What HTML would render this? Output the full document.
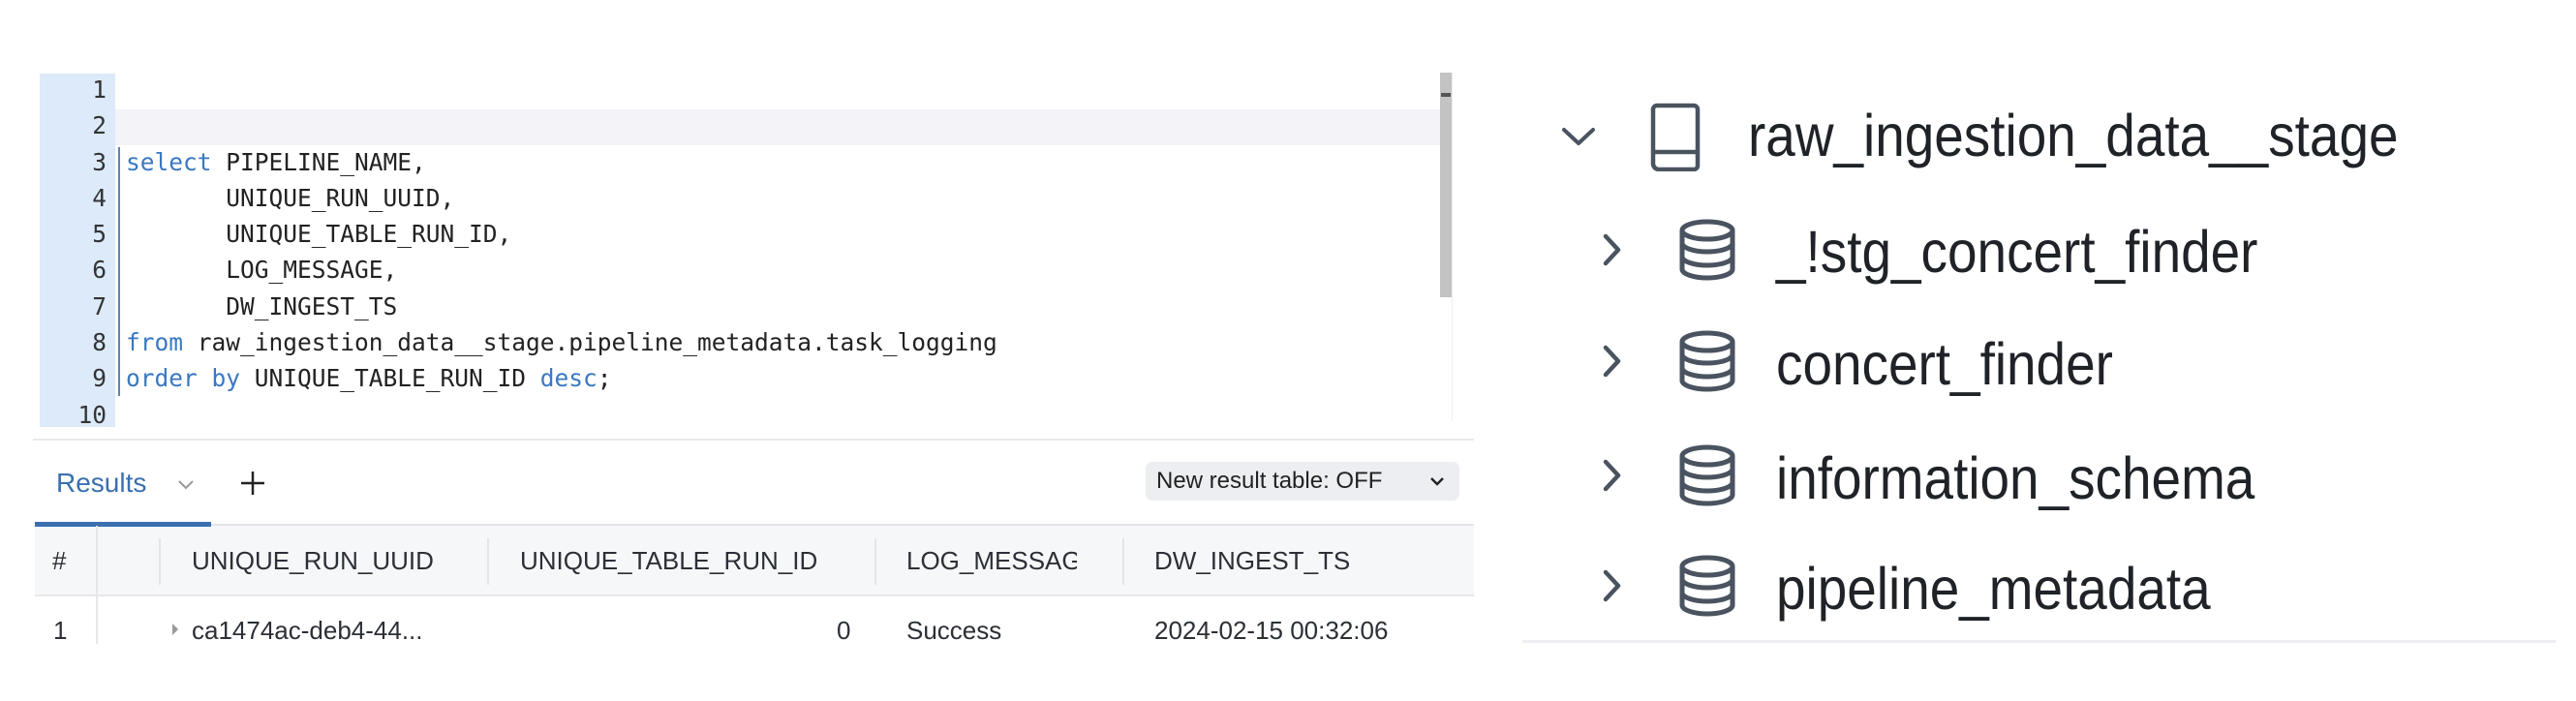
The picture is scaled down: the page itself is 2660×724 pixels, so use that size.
<!DOCTYPE html>
<html><head><meta charset="utf-8"><style>
*{margin:0;padding:0;box-sizing:border-box}
body{width:2660px;height:724px;background:#fff;position:relative;overflow:hidden;font-family:"Liberation Sans",sans-serif}
.a{position:absolute;white-space:pre}
.code{font-family:"DejaVu Sans Mono","Liberation Mono",monospace;font-size:24.5px;color:#222;line-height:37.3px}
.kw{color:#3a78c3}
.ln{font-family:"DejaVu Sans Mono",monospace;font-size:24.5px;color:#333;width:84px;text-align:right;line-height:37.3px}
.r{font-size:26px;color:#2b2f36;line-height:30px}
.t{font-size:61px;color:#1f2328;line-height:64px;transform:scaleX(0.9);transform-origin:0 50%}
</style></head><body>
<!-- editor -->
<div class="a" style="left:41px;top:76px;width:78px;height:365px;background:#dceafa"></div>
<div class="a" style="left:119px;top:113px;width:1368px;height:37px;background:#f3f3f8"></div>
<div class="a" style="left:122px;top:152px;width:2px;height:257px;background:#5b86b5"></div>
<div class="a" style="left:1487px;top:75px;width:12px;height:232px;background:#c3c3c3"></div>
<div class="a" style="left:1488px;top:96px;width:10px;height:4px;background:#555"></div>
<div class="a" style="left:1499px;top:75px;width:1px;height:360px;background:#eee"></div>
<div class="a ln" style="left:26px;top:74px">1
2
3
4
5
6
7
8
9
10</div>
<div class="a code" style="left:130px;top:74px">

<span class="kw">select</span> PIPELINE_NAME,
       UNIQUE_RUN_UUID,
       UNIQUE_TABLE_RUN_ID,
       LOG_MESSAGE,
       DW_INGEST_TS
<span class="kw">from</span> raw_ingestion_data__stage.pipeline_metadata.task_logging
<span class="kw">order by</span> UNIQUE_TABLE_RUN_ID <span class="kw">desc</span>;
</div>
<div class="a" style="left:34px;top:453px;width:1488px;height:2px;background:#e8e9ec"></div>
<!-- results bar -->
<div class="a" style="left:58px;top:483px;font-size:28px;color:#3a6fb0;line-height:32px">Results</div>
<svg class="a" style="left:180px;top:492px" width="24" height="16" viewBox="0 0 24 16"><path d="M5 5l7 7 7-7" fill="none" stroke="#999" stroke-width="2"/></svg>
<svg class="a" style="left:245px;top:483px" width="32" height="32" viewBox="0 0 32 32"><path d="M16 4v24M4 16h24" stroke="#222" stroke-width="2.5"/></svg>
<div class="a" style="left:1183px;top:477px;width:324px;height:40px;background:#eceef2;border-radius:7px"></div>
<div class="a" style="left:1194px;top:483px;font-size:24px;color:#222;line-height:28px">New result table: OFF</div>
<svg class="a" style="left:1474px;top:490px" width="20" height="14" viewBox="0 0 20 14"><path d="M4 4l6 6 6-6" fill="none" stroke="#222" stroke-width="2.4"/></svg>
<!-- table -->
<div class="a" style="left:36px;top:541px;width:1486px;height:75px;background:#f6f7f9;border-top:2px solid #e3e5e8;border-bottom:2px solid #e6e7ea"></div>
<div class="a" style="left:36px;top:539px;width:182px;height:5px;background:#3a6fb0"></div>
<div class="a" style="left:99px;top:543px;width:2px;height:122px;background:#e6e7ea"></div>
<div class="a" style="left:164px;top:556px;width:2px;height:48px;background:#e3e5e8"></div>
<div class="a" style="left:503px;top:556px;width:2px;height:48px;background:#e3e5e8"></div>
<div class="a" style="left:903px;top:556px;width:2px;height:48px;background:#e3e5e8"></div>
<div class="a" style="left:1159px;top:556px;width:2px;height:48px;background:#e3e5e8"></div>
<div class="a r" style="left:54px;top:564px">#</div>
<div class="a r" style="left:198px;top:564px;width:294px;overflow:hidden">UNIQUE_RUN_UUID</div>
<div class="a r" style="left:537px;top:564px;width:318px;overflow:hidden">UNIQUE_TABLE_RUN_ID</div>
<div class="a r" style="left:936px;top:564px;width:176px;overflow:hidden">LOG_MESSAGE</div>
<div class="a r" style="left:1192px;top:564px">DW_INGEST_TS</div>
<div class="a r" style="left:55px;top:636px">1</div>
<svg class="a" style="left:176px;top:642px" width="10" height="16" viewBox="0 0 10 16"><path d="M2 2l6 6-6 6z" fill="#999"/></svg>
<div class="a r" style="left:198px;top:636px">ca1474ac-deb4-44...</div>
<div class="a r" style="left:864px;top:636px">0</div>
<div class="a r" style="left:936px;top:636px">Success</div>
<div class="a r" style="left:1192px;top:636px">2024-02-15 00:32:06</div>
<!-- tree -->
<svg class="a" style="left:1610px;top:128px" width="40" height="28" viewBox="0 0 40 28"><path d="M5 6l15 14 15-14" fill="none" stroke="#4a5360" stroke-width="4" stroke-linecap="round" stroke-linejoin="round"/></svg>
<svg class="a" style="left:1703px;top:105px" width="56" height="72" viewBox="0 0 56 72"><path d="M8 4h38a4 4 0 0 1 4 4v58a4 4 0 0 1-4 4H10a6 6 0 0 1-6-6V8a4 4 0 0 1 4-4zM4 52h46" fill="none" stroke="#4a5360" stroke-width="4.5" stroke-linejoin="round"/></svg>
<div class="a t" style="left:1805px;top:108px">raw_ingestion_data__stage</div>
<div class="a" style="left:1572px;top:661px;width:1067px;height:3px;background:#eceef1"></div>
<svg class="a" style="left:1650px;top:237px" width="36" height="420" viewBox="0 0 36 420"><g fill="none" stroke="#4a5360" stroke-width="4.5" stroke-linecap="round" stroke-linejoin="round"><path d="M8 7l13 14-13 14"/><path d="M8 122l13 14-13 14"/><path d="M8 240l13 14-13 14"/><path d="M8 354l13 14-13 14"/></g></svg>
<svg class="a" style="left:1733px;top:226px" width="64" height="420" viewBox="0 0 64 420"><defs><g id="db" fill="none" stroke="#4a5360" stroke-width="5"><ellipse cx="30" cy="12" rx="26" ry="9"/><path d="M4 12v40c0 5 12 9 26 9s26-4 26-9V12M4 25c0 5 12 9 26 9s26-4 26-9M4 39c0 5 12 9 26 9s26-4 26-9"/></g></defs><use href="#db" y="0"/><use href="#db" y="115"/><use href="#db" y="233"/><use href="#db" y="347"/></svg>
<div class="a t" style="left:1834px;top:228px">_!stg_concert_finder</div>
<div class="a t" style="left:1834px;top:344px">concert_finder</div>
<div class="a t" style="left:1834px;top:462px">information_schema</div>
<div class="a t" style="left:1834px;top:576px">pipeline_metadata</div>
</body></html>
